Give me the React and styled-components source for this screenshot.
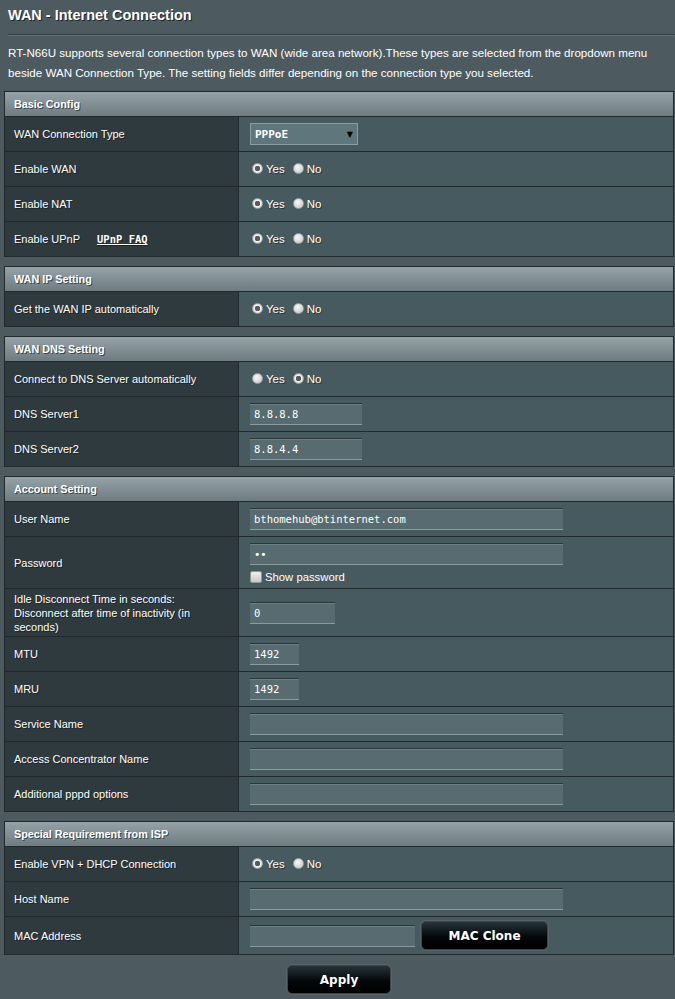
import React from 'react';
import styled, { createGlobalStyle } from 'styled-components';

const GlobalStyle = createGlobalStyle`
  body {
    margin: 0;
    background: #4d5a5f;
    font-family: "Liberation Sans", Arial, sans-serif;
    color: #fff;
  }
`;

const Page = styled.div`
  width: 675px;
  box-sizing: border-box;
  padding: 0 1px 6px 4px;
`;

const Title = styled.h1`
  margin: 0 0 0 4px;
  padding: 6px 0 10px;
  font-size: 14.5px;
  line-height: 18px;
  font-weight: bold;
  text-shadow: 1px 1px 0 #1e2426;
  border-bottom: 1px solid #343f43;
  box-shadow: 0 1px 0 #637075;
`;

const Intro = styled.p`
  margin: 8px 0 0 4px;
  font-size: 11.6px;
  line-height: 20px;
`;

const Table = styled.section`
  margin-top: ${(p) => p.$gap || 9}px;
  border: 1px solid #22292c;
`;

const Head = styled.div`
  height: 24px;
  line-height: 24px;
  padding-left: 9px;
  font-size: 10.8px;
  font-weight: bold;
  text-shadow: 1px 1px 0 #3c464a;
  background: linear-gradient(#95a3a8, #6e7c82);
  border-bottom: 1px solid #22292c;
`;

const Row = styled.div`
  display: grid;
  grid-template-columns: 234px 1fr;
  min-height: ${(p) => p.$h || 34}px;
  & + & {
    border-top: 1px solid #22292c;
  }
`;

const Label = styled.div`
  display: flex;
  align-items: center;
  padding: 0 9px;
  background: #2f3a3e;
  border-right: 1px solid #22292c;
  font-size: 11px;
  line-height: 14px;
  text-shadow: 1px 1px 0 #1c2224;
`;

const Value = styled.div`
  display: flex;
  flex-direction: ${(p) => (p.$col ? 'column' : 'row')};
  align-items: ${(p) => (p.$col ? 'flex-start' : 'center')};
  justify-content: ${(p) => (p.$col ? 'center' : 'flex-start')};
  gap: 6px;
  padding: 0 11px;
  background: #475a5f;
  font-size: 11px;
`;

const FaqLink = styled.a`
  margin-left: 17px;
  font-family: "DejaVu Sans Mono", monospace;
  font-size: 10.5px;
  font-weight: bold;
  color: #fff;
  text-decoration: underline;
`;

const RadioLabel = styled.label`
  display: inline-flex;
  align-items: center;
  gap: 3px;
  margin-left: 2px;
  font-size: 11.5px;
  text-shadow: 1px 1px 0 #2a3336;
`;

const RadioDot = styled.span`
  width: 11px;
  height: 11px;
  margin-top: -2px;
  border-radius: 50%;
  box-sizing: border-box;
  background: ${(p) =>
    p.$on
      ? 'radial-gradient(circle, #5a5a5a 0 2.5px, #f2f2f2 3px, #c9c9c9 100%)'
      : 'radial-gradient(circle at 40% 35%, #f7f7f7, #c4c4c4)'};
  border: 1px solid #9ca4a7;
`;

const TextBox = styled.input`
  width: ${(p) => p.$w}px;
  height: 22px;
  box-sizing: border-box;
  padding: 0 4px;
  background: #576b71;
  color: #fff;
  font-family: "DejaVu Sans Mono", monospace;
  font-size: 10.5px;
  border: 0;
  border-top: 1px solid #2c3538;
  border-bottom: 1px solid #8a9a9f;
  box-shadow: inset 0 1px 0 #6c7f85;
  outline: none;
`;

const Select = styled.div`
  width: 108px;
  height: 22px;
  box-sizing: border-box;
  display: flex;
  align-items: center;
  justify-content: space-between;
  padding: 0 4px 0 4px;
  background: #5f767c;
  border: 1px solid #8b9ca1;
  font-family: "DejaVu Sans Mono", monospace;
  font-size: 11px;
  font-weight: bold;
  & span {
    color: #000;
    font-size: 8px;
    font-family: "DejaVu Sans", sans-serif;
  }
`;

const CheckLine = styled.label`
  display: flex;
  align-items: center;
  gap: 3px;
  font-size: 11.3px;
`;

const CheckBox = styled.span`
  width: 12px;
  height: 12px;
  box-sizing: border-box;
  border: 1px solid #8e9698;
  border-radius: 2px;
  background: linear-gradient(#eeeeee, #c9c9c9);
`;

const Button = styled.button`
  width: ${(p) => p.$w}px;
  height: 29px;
  border: 1px solid #3b464a;
  border-radius: 5px;
  background: linear-gradient(#26343a, #050708 55%, #000);
  box-shadow: 0 0 0 1px #56646a;
  color: #fff;
  font-family: "DejaVu Sans", Verdana, sans-serif;
  font-size: 12px;
  font-weight: bold;
  cursor: pointer;
`;

const Footer = styled.div`
  display: flex;
  justify-content: center;
  padding: 10px 0 0 0;
`;

const Radios = ({ on }) => (
  <>
    <RadioLabel>
      <RadioDot $on={on === 'yes'} />
      Yes
    </RadioLabel>
    <RadioLabel>
      <RadioDot $on={on === 'no'} />
      No
    </RadioLabel>
  </>
);

const App = () => (
  <Page>
    <GlobalStyle />
    <Title>WAN - Internet Connection</Title>
    <Intro>
      RT-N66U supports several connection types to WAN (wide area network).These types are selected from the dropdown menu
      beside WAN Connection Type. The setting fields differ depending on the connection type you selected.
    </Intro>

    <Table $gap={8}>
      <Head>Basic Config</Head>
      <Row>
        <Label>WAN Connection Type</Label>
        <Value>
          <Select>
            PPPoE<span>▼</span>
          </Select>
        </Value>
      </Row>
      <Row>
        <Label>Enable WAN</Label>
        <Value><Radios on="yes" /></Value>
      </Row>
      <Row>
        <Label>Enable NAT</Label>
        <Value><Radios on="yes" /></Value>
      </Row>
      <Row>
        <Label>
          Enable UPnP<FaqLink href="#">UPnP&nbsp;FAQ</FaqLink>
        </Label>
        <Value><Radios on="yes" /></Value>
      </Row>
    </Table>

    <Table>
      <Head>WAN IP Setting</Head>
      <Row>
        <Label>Get the WAN IP automatically</Label>
        <Value><Radios on="yes" /></Value>
      </Row>
    </Table>

    <Table>
      <Head>WAN DNS Setting</Head>
      <Row>
        <Label>Connect to DNS Server automatically</Label>
        <Value><Radios on="no" /></Value>
      </Row>
      <Row>
        <Label>DNS Server1</Label>
        <Value><TextBox $w={112} defaultValue="8.8.8.8" /></Value>
      </Row>
      <Row>
        <Label>DNS Server2</Label>
        <Value><TextBox $w={112} defaultValue="8.8.4.4" /></Value>
      </Row>
    </Table>

    <Table>
      <Head>Account Setting</Head>
      <Row>
        <Label>User Name</Label>
        <Value><TextBox $w={313} defaultValue="bthomehub@btinternet.com" /></Value>
      </Row>
      <Row $h={51}>
        <Label>Password</Label>
        <Value $col>
          <TextBox $w={313} type="password" defaultValue="ab" />
          <CheckLine>
            <CheckBox />
            Show password
          </CheckLine>
        </Value>
      </Row>
      <Row $h={47}>
        <Label>
          Idle Disconnect Time in seconds:
          <br />
          Disconnect after time of inactivity (in
          <br />
          seconds)
        </Label>
        <Value><TextBox $w={85} defaultValue="0" /></Value>
      </Row>
      <Row>
        <Label>MTU</Label>
        <Value><TextBox $w={49} defaultValue="1492" /></Value>
      </Row>
      <Row>
        <Label>MRU</Label>
        <Value><TextBox $w={49} defaultValue="1492" /></Value>
      </Row>
      <Row>
        <Label>Service Name</Label>
        <Value><TextBox $w={313} /></Value>
      </Row>
      <Row>
        <Label>Access Concentrator Name</Label>
        <Value><TextBox $w={313} /></Value>
      </Row>
      <Row>
        <Label>Additional pppd options</Label>
        <Value><TextBox $w={313} /></Value>
      </Row>
    </Table>

    <Table>
      <Head>Special Requirement from ISP</Head>
      <Row>
        <Label>Enable VPN + DHCP Connection</Label>
        <Value><Radios on="yes" /></Value>
      </Row>
      <Row>
        <Label>Host Name</Label>
        <Value><TextBox $w={313} /></Value>
      </Row>
      <Row $h={37}>
        <Label>MAC Address</Label>
        <Value>
          <TextBox $w={165} />
          <Button $w={127}>MAC Clone</Button>
        </Value>
      </Row>
    </Table>

    <Footer>
      <Button $w={104}>Apply</Button>
    </Footer>
  </Page>
);

export default App;
